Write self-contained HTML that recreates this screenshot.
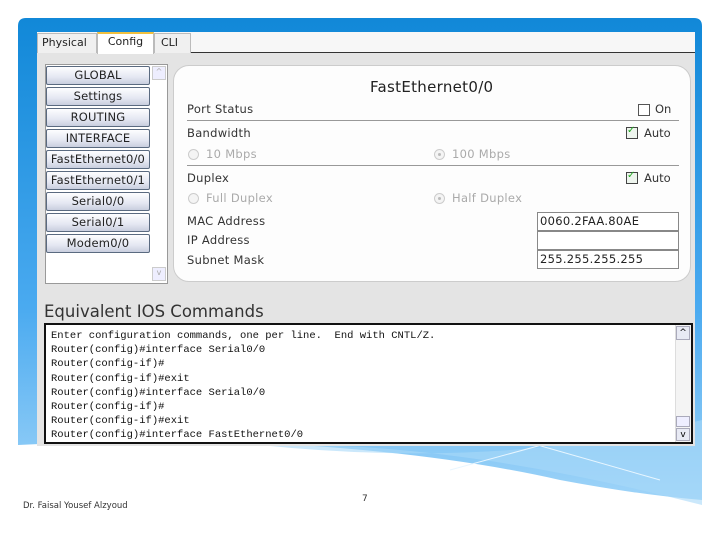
<!DOCTYPE html>
<html><head><style>
*{margin:0;padding:0;box-sizing:border-box}
body{width:720px;height:540px;background:#fff;position:relative;overflow:hidden;font-family:"DejaVu Sans","Liberation Sans",sans-serif;}
.abs{position:absolute}
.btn{position:absolute;left:46px;width:104px;height:19px;border:1px solid #5a6a80;border-radius:2px;background:linear-gradient(#fdfdff,#e4e7f2 60%,#c9cede);font-size:11.5px;color:#222;text-align:center;line-height:17px;letter-spacing:0.2px;white-space:nowrap;overflow:hidden}
.lbl{position:absolute;left:187px;font-size:11.5px;color:#333;letter-spacing:0.3px}
.gray{color:#aaa}
.hr{position:absolute;left:187px;width:492px;height:1px;background:#999}
.radio{position:absolute;width:11px;height:11px;border:1px solid #ccc;border-radius:50%;background:#f4f4f4}
.radio.on::after{content:"";position:absolute;left:3px;top:3px;width:3px;height:3px;border-radius:50%;background:#bbb}
.cb{position:absolute;width:12px;height:12px;border:1px solid #444;background:#eef5ee}
.field{position:absolute;left:537px;width:142px;height:19px;border:1px solid #888;background:#fff;font-size:11.5px;line-height:17px;padding-left:2px;color:#222;letter-spacing:0.3px}
.con div{font-family:"Liberation Mono","DejaVu Sans Mono",monospace;font-size:10.5px;height:14.2px;line-height:14px;color:#111;white-space:nowrap}
</style></head><body>
<svg class="abs" style="left:0;top:0" width="720" height="540">
<defs>
<linearGradient id="g" x1="0" y1="0" x2="0" y2="1"><stop offset="0" stop-color="#1188d8"/><stop offset="0.6" stop-color="#4aaaf0"/><stop offset="1" stop-color="#9fd4f8"/></linearGradient>
</defs>
<path d="M26 18 H694 Q702 18 702 26 V500 Q640 495 560 480 Q450 455 300 445 Q150 438 18 445 V26 Q18 18 26 18Z" fill="url(#g)"/>
<path d="M260 445 Q450 440 702 505 L702 420 Q500 470 260 445Z" fill="#a8d9f8" opacity="0.6"/>
<path d="M450 470 L560 440 M520 440 L660 480" stroke="#e8f6ff" stroke-width="1"/>
</svg>
<div class="abs" style="left:37px;top:32px;width:658px;height:414px;background:#e4e4e4"></div>
<div class="abs" style="left:37px;top:32px;width:658px;height:21px;background:#f7f7f7;border-bottom:1px solid #333"></div>
<div class="abs" style="left:37px;top:33px;width:60px;height:20px;border:1px solid #bbb;border-bottom:none;background:#f0f0f0;font-size:11px;line-height:17px;padding-left:4px;color:#222">Physical</div>
<div class="abs" style="left:97px;top:32px;width:57px;height:22px;border:1px solid #bbb;border-top:2px solid #f0c040;border-bottom:none;background:#fff;font-size:11px;line-height:16px;text-align:center;color:#222">Config</div>
<div class="abs" style="left:154px;top:33px;width:37px;height:20px;border:1px solid #bbb;border-bottom:none;background:#f0f0f0;font-size:11px;line-height:17px;padding-left:6px;color:#222">CLI</div>

<div class="abs" style="left:45px;top:64px;width:123px;height:220px;border:1px solid #999;background:#fff"></div>
<div class="abs" style="left:152px;top:66px;width:14px;height:14px;border:1px solid #ccc;background:#eef;font-size:8px;color:#aaa;text-align:center">^</div>
<div class="abs" style="left:152px;top:267px;width:14px;height:14px;border:1px solid #ccc;background:#eef;font-size:8px;color:#aaa;text-align:center">v</div>
<div class="btn" style="top:66px">GLOBAL</div>
<div class="btn" style="top:87px">Settings</div>
<div class="btn" style="top:108px">ROUTING</div>
<div class="btn" style="top:129px">INTERFACE</div>
<div class="btn" style="top:150px">FastEthernet0/0</div>
<div class="btn" style="top:171px">FastEthernet0/1</div>
<div class="btn" style="top:192px">Serial0/0</div>
<div class="btn" style="top:213px">Serial0/1</div>
<div class="btn" style="top:234px">Modem0/0</div>

<div class="abs" style="left:173px;top:65px;width:518px;height:217px;border:1px solid #ccc;border-radius:16px;background:#fdfdfd"></div>
<div class="abs" style="left:370px;top:78px;font-size:15px;color:#222;letter-spacing:0.3px">FastEthernet0/0</div>
<div class="lbl" style="top:102px">Port Status</div>
<div class="cb" style="left:638px;top:104px;background:#fff;border-color:#555"></div>
<div class="abs" style="left:655px;top:102px;font-size:11.5px;color:#333">On</div>
<div class="hr" style="top:120px"></div>
<div class="lbl" style="top:126px">Bandwidth</div>
<div class="cb" style="left:626px;top:127px"></div><div class="abs" style="left:627px;top:125px;font-size:10px;color:#2a2">✓</div>
<div class="abs" style="left:644px;top:126px;font-size:11.5px;color:#333">Auto</div>
<div class="radio" style="left:188px;top:149px"></div><div class="lbl gray" style="left:206px;top:147px">10 Mbps</div>
<div class="radio on" style="left:434px;top:149px"></div><div class="lbl gray" style="left:452px;top:147px">100 Mbps</div>
<div class="hr" style="top:165px"></div>
<div class="lbl" style="top:171px">Duplex</div>
<div class="cb" style="left:626px;top:172px"></div><div class="abs" style="left:627px;top:170px;font-size:10px;color:#2a2">✓</div>
<div class="abs" style="left:644px;top:171px;font-size:11.5px;color:#333">Auto</div>
<div class="radio" style="left:188px;top:193px"></div><div class="lbl gray" style="left:206px;top:191px">Full Duplex</div>
<div class="radio on" style="left:434px;top:193px"></div><div class="lbl gray" style="left:452px;top:191px">Half Duplex</div>
<div class="lbl" style="top:214px">MAC Address</div>
<div class="lbl" style="top:233px">IP Address</div>
<div class="lbl" style="top:253px">Subnet Mask</div>
<div class="field" style="top:212px">0060.2FAA.80AE</div>
<div class="field" style="top:231px"></div>
<div class="field" style="top:250px">255.255.255.255</div>

<div class="abs" style="left:44px;top:302px;font-size:16.5px;color:#333">Equivalent IOS Commands</div>
<div class="abs con" style="left:44px;top:323px;width:649px;height:121px;border:2px solid #111;background:#fff;padding:4px 0 0 5px">
<div>Enter configuration commands, one per line.&nbsp; End with CNTL/Z.</div>
<div>Router(config)#interface Serial0/0</div>
<div>Router(config-if)#</div>
<div>Router(config-if)#exit</div>
<div>Router(config)#interface Serial0/0</div>
<div>Router(config-if)#</div>
<div>Router(config-if)#exit</div>
<div>Router(config)#interface FastEthernet0/0</div>
</div>
<div class="abs" style="left:675px;top:325px;width:16px;height:117px;background:#f4f4f4;border-left:1px solid #ddd"></div>
<div class="abs" style="left:676px;top:326px;width:14px;height:14px;border:1px solid #aab;background:#e8eaf4;font-size:9px;text-align:center;line-height:13px">^</div>
<div class="abs" style="left:676px;top:416px;width:14px;height:11px;border:1px solid #aab;background:#eef"></div>
<div class="abs" style="left:676px;top:428px;width:14px;height:13px;border:1px solid #aab;background:#e8eaf4;font-size:9px;text-align:center;line-height:12px">v</div>

<div class="abs" style="left:23px;top:501px;font-size:8.5px;color:#333">Dr. Faisal Yousef Alzyoud</div>
<div class="abs" style="left:362px;top:494px;font-size:9px;color:#333">7</div>
</body></html>
